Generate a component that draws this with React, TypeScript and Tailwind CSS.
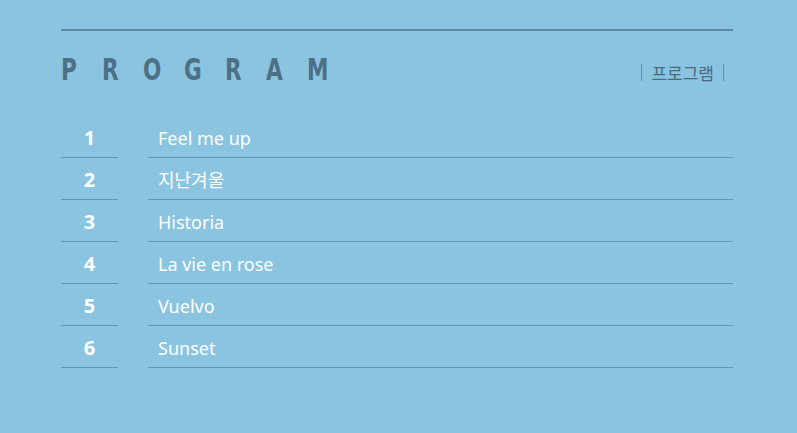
import React from "react";

const items = ["Feel me up", "지난겨울", "Historia", "La vie en rose", "Vuelvo", "Sunset"];

export default function App() {
  return (
    <div className="w-[797px] h-[433px] bg-[#8ac4e0] overflow-hidden" style={{ fontFamily: '"Noto Sans", "Noto Sans CJK KR", sans-serif' }}>
      <div className="ml-[61px] w-[672px] pt-[29px]">
        <div className="h-[2px] bg-[#5d8aa2]" />
        <div className="flex justify-between items-end mt-[20px] h-[34px]">
          <div className="flex text-[#4d7086] font-bold text-[30px] leading-none" style={{ fontFamily: '"DejaVu Sans Condensed", "DejaVu Sans", sans-serif' }}>
            {"PROGRAM".split("").map((c, i) => (
              <span key={i} className="w-[41px] inline-block scale-x-[0.8] origin-left">{c}</span>
            ))}
          </div>
          <div className="text-[17px] font-normal text-[#4a6a7e] mr-[9px] leading-none mb-[4px] flex items-center gap-[9px]" style={{ fontFamily: '"Noto Sans CJK KR", sans-serif' }}>
            <span className="w-px h-[17px] bg-[#6d8fa2]" />
            <span>프로그램</span>
            <span className="w-px h-[17px] bg-[#6d8fa2]" />
          </div>
        </div>
        <div className="mt-[31px] flex flex-col">
          {items.map((t, i) => (
            <div key={i} className="flex gap-[30px] h-[42px]">
              <div className="w-[57px] border-b border-[#6496b0] flex items-center justify-center pt-[3px] text-white font-bold text-[20px]">{i + 1}</div>
              <div className="flex-1 border-b border-[#6496b0] flex items-center pl-[10px] pt-[3px] text-white text-[18px]">{t}</div>
            </div>
          ))}
        </div>
      </div>
    </div>
  );
}
